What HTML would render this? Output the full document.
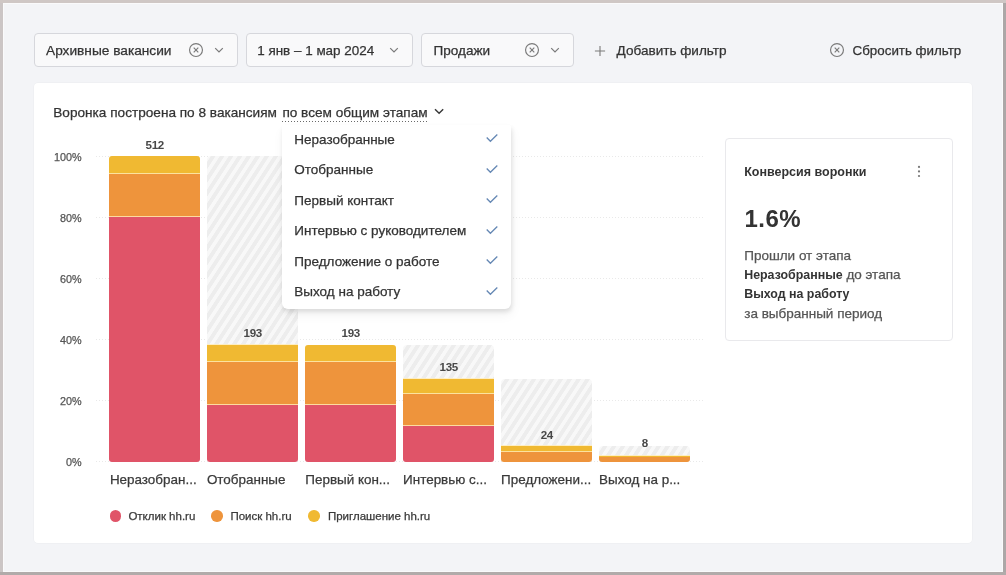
<!DOCTYPE html>
<html>
<head>
<meta charset="utf-8">
<style>
html,body{margin:0;padding:0;}
body{width:1006px;height:575px;overflow:hidden;position:relative;will-change:transform;-webkit-text-stroke:0.25px currentColor;background:#b8b1b1;font-family:"Liberation Sans",sans-serif;color:#333;}
.frame{position:absolute;left:0;top:0;width:1006px;height:575px;background:linear-gradient(#cfc7c5,#cfc7c5) 0 0/1006px 3px no-repeat,linear-gradient(#b1abaa,#b1abaa) 0 572px/1006px 3px no-repeat,linear-gradient(#aca7a7,#aca7a7) 1003px 0/3px 575px no-repeat,#cbc5c5;}
.inner{position:absolute;left:3px;top:3px;width:1000px;height:569px;background:#f3f4f7;box-shadow:inset 0 0 0 1px #fafafb;}
.a{position:absolute;}
.t{position:absolute;white-space:nowrap;line-height:1;}
.box{position:absolute;top:33px;height:32px;border:1px solid #d6d7dc;border-radius:4px;background:#f9f9fa;}
.card{position:absolute;left:34px;top:82.5px;width:938px;height:460.5px;background:#fff;border-radius:4px;box-shadow:0 0 0 0.5px #ebecef;}
.grid{position:absolute;left:96px;width:609px;height:1px;background-image:linear-gradient(to right,#e9e9e9 50%,transparent 50%);background-size:3px 1px;}
.hatch{position:absolute;border-radius:4px 4px 0 0;background:repeating-linear-gradient(123deg,#f8f8f8 0px,#f8f8f8 3px,#ededed 3.6px,#ededed 6.9px,#f8f8f8 7.5px);}
.seg{position:absolute;}
.y{background:#f0b932;}
.o{background:#ee943c;}
.r{background:#e05468;}
.sep{position:absolute;height:1px;background:rgba(255,236,185,0.8);}
.val{-webkit-text-stroke:0;position:absolute;white-space:nowrap;line-height:1;font-size:11.6px;font-weight:bold;color:#484848;letter-spacing:-0.35px;margin-top:-0.2px;text-align:center;width:91px;}
.yl{position:absolute;white-space:nowrap;line-height:1;font-size:10.8px;color:#555;text-align:right;width:60px;left:21.5px;}
.xl{position:absolute;white-space:nowrap;line-height:1;font-size:13.45px;color:#3a3a3a;top:473.4px;margin-left:-0.5px;}
.dd{position:absolute;left:282px;top:125px;width:229px;height:184px;background:#fff;border-radius:2px 2px 6px 6px;box-shadow:1px 3px 4px rgba(0,0,0,0.10),1px 6px 12px rgba(0,0,0,0.05);}
.di{position:absolute;left:294.3px;white-space:nowrap;line-height:1;font-size:13.5px;margin-top:0.2px;color:#333;}
.ck{position:absolute;left:485px;}
.dot{position:absolute;width:11.5px;height:11.5px;border-radius:50%;top:510.3px;}
.lg{position:absolute;white-space:nowrap;line-height:1;font-size:11.5px;color:#3a3a3a;top:510.8px;}
b,.bold{-webkit-text-stroke:0;}
</style>
</head>
<body>
<div class="frame"></div>
<div class="inner"></div>

<!-- filter bar -->
<div class="box" style="left:34px;width:202px;"></div>
<div class="t" style="left:46px;top:43.8px;font-size:13.7px;">Архивные вакансии</div>
<svg class="a" style="left:188px;top:42.2px" width="16" height="16" viewBox="0 0 16 16"><circle cx="8" cy="8" r="6.45" fill="none" stroke="#7a7a7a" stroke-width="1.15"/><path d="M5.7 5.7L10.3 10.3M10.3 5.7L5.7 10.3" stroke="#7a7a7a" stroke-width="1.15"/></svg>
<svg class="a" style="left:213px;top:45.3px" width="12" height="10" viewBox="0 0 12 10"><path d="M2.2 3.1L6 6.9L9.8 3.1" fill="none" stroke="#7a7a7a" stroke-width="1.2"/></svg>

<div class="box" style="left:246px;width:165px;"></div>
<div class="t" style="left:257.2px;top:43.6px;font-size:13.45px;">1 янв – 1 мар 2024</div>
<svg class="a" style="left:388.2px;top:45.3px" width="12" height="10" viewBox="0 0 12 10"><path d="M2.2 3.1L6 6.9L9.8 3.1" fill="none" stroke="#7a7a7a" stroke-width="1.2"/></svg>

<div class="box" style="left:421px;width:151px;"></div>
<div class="t" style="left:433.6px;top:43.6px;font-size:13.55px;">Продажи</div>
<svg class="a" style="left:523.7px;top:42.2px" width="16" height="16" viewBox="0 0 16 16"><circle cx="8" cy="8" r="6.45" fill="none" stroke="#7a7a7a" stroke-width="1.15"/><path d="M5.7 5.7L10.3 10.3M10.3 5.7L5.7 10.3" stroke="#7a7a7a" stroke-width="1.15"/></svg>
<svg class="a" style="left:548.6px;top:45.3px" width="12" height="10" viewBox="0 0 12 10"><path d="M2.2 3.1L6 6.9L9.8 3.1" fill="none" stroke="#7a7a7a" stroke-width="1.2"/></svg>

<svg class="a" style="left:592px;top:42.6px" width="16" height="16" viewBox="0 0 16 16"><path d="M8 2.9V13.1M2.9 8H13.1" stroke="#7a7a7a" stroke-width="1.1"/></svg>
<div class="t" style="left:616.6px;top:43.6px;font-size:13.55px;">Добавить фильтр</div>

<svg class="a" style="left:828.9px;top:42.2px" width="16" height="16" viewBox="0 0 16 16"><circle cx="8" cy="8" r="6.45" fill="none" stroke="#7a7a7a" stroke-width="1.15"/><path d="M5.7 5.7L10.3 10.3M10.3 5.7L5.7 10.3" stroke="#7a7a7a" stroke-width="1.15"/></svg>
<div class="t" style="left:852.6px;top:43.6px;font-size:13.35px;">Сбросить фильтр</div>

<!-- card -->
<div class="card"></div>
<div class="t" style="left:53.3px;top:105.7px;font-size:13.62px;">Воронка построена по 8 вакансиям</div>
<div class="t" style="left:282.4px;top:105.7px;font-size:13.62px;">по всем общим этапам</div>
<div class="a" style="left:281.8px;top:121px;width:145px;height:1px;background-image:linear-gradient(to right,#6a6a6a 50%,transparent 50%);background-size:3px 1px;"></div>
<svg class="a" style="left:433.3px;top:106.3px" width="12" height="10" viewBox="0 0 12 10"><path d="M2 3.3L6.1 7.3L10.2 3.3" fill="none" stroke="#383838" stroke-width="1.45"/></svg>

<!-- grid -->
<div class="grid" style="top:156px"></div>
<div class="grid" style="top:217px"></div>
<div class="grid" style="top:278px"></div>
<div class="grid" style="top:339px"></div>
<div class="grid" style="top:400px"></div>
<div class="grid" style="top:461px"></div>
<div class="yl" style="top:151.7px">100%</div>
<div class="yl" style="top:212.7px">80%</div>
<div class="yl" style="top:273.7px">60%</div>
<div class="yl" style="top:334.7px">40%</div>
<div class="yl" style="top:395.7px">20%</div>
<div class="yl" style="top:456.7px">0%</div>

<!-- bars -->
<div class="seg y" style="left:109px;top:156px;width:91px;height:18px;border-radius:3px 3px 0 0;"></div>
<div class="seg o" style="left:109px;top:174px;width:91px;height:43px;"></div>
<div class="seg r" style="left:109px;top:217px;width:91px;height:245px;border-bottom-left-radius:3px;border-bottom-right-radius:3px;"></div>
<div class="sep" style="left:109px;top:173px;width:91px"></div>
<div class="sep" style="left:109px;top:216px;width:91px"></div>
<div class="val" style="left:109.25px;top:138.9px">512</div>

<div class="hatch" style="left:207px;top:156px;width:91px;height:189px"></div>
<div class="seg y" style="left:207px;top:345px;width:91px;height:17px;"></div>
<div class="seg o" style="left:207px;top:362px;width:91px;height:43px;"></div>
<div class="seg r" style="left:207px;top:405px;width:91px;height:57px;border-bottom-left-radius:3px;border-bottom-right-radius:3px;"></div>
<div class="sep" style="left:207px;top:344px;width:91px"></div>
<div class="sep" style="left:207px;top:361px;width:91px"></div>
<div class="sep" style="left:207px;top:404px;width:91px"></div>
<div class="val" style="left:207.25px;top:327.2px">193</div>

<div class="seg y" style="left:305px;top:345px;width:91px;height:17px;border-radius:3px 3px 0 0;"></div>
<div class="seg o" style="left:305px;top:362px;width:91px;height:43px;"></div>
<div class="seg r" style="left:305px;top:405px;width:91px;height:57px;border-bottom-left-radius:3px;border-bottom-right-radius:3px;"></div>
<div class="sep" style="left:305px;top:361px;width:91px"></div>
<div class="sep" style="left:305px;top:404px;width:91px"></div>
<div class="val" style="left:305.25px;top:327.2px">193</div>

<div class="hatch" style="left:403px;top:345px;width:91px;height:34px"></div>
<div class="seg y" style="left:403px;top:379px;width:91px;height:15px;"></div>
<div class="seg o" style="left:403px;top:394px;width:91px;height:32px;"></div>
<div class="seg r" style="left:403px;top:426px;width:91px;height:36px;border-bottom-left-radius:3px;border-bottom-right-radius:3px;"></div>
<div class="sep" style="left:403px;top:378px;width:91px"></div>
<div class="sep" style="left:403px;top:393px;width:91px"></div>
<div class="sep" style="left:403px;top:425px;width:91px"></div>
<div class="val" style="left:403.25px;top:361.4px">135</div>

<div class="hatch" style="left:501px;top:379px;width:91px;height:67px"></div>
<div class="seg y" style="left:501px;top:446px;width:91px;height:6px;"></div>
<div class="seg o" style="left:501px;top:452px;width:91px;height:10px;border-bottom-left-radius:3px;border-bottom-right-radius:3px;"></div>
<div class="sep" style="left:501px;top:445px;width:91px"></div>
<div class="sep" style="left:501px;top:451px;width:91px"></div>
<div class="val" style="left:501.25px;top:428.9px">24</div>

<div class="hatch" style="left:599px;top:446px;width:91px;height:10px"></div>
<div class="seg y" style="left:599px;top:456px;width:91px;height:1px;"></div>
<div class="seg o" style="left:599px;top:457px;width:91px;height:5px;border-bottom-left-radius:3px;border-bottom-right-radius:3px;"></div>
<div class="sep" style="left:599px;top:455px;width:91px"></div>
<div class="val" style="left:599.25px;top:437.6px">8</div>

<!-- x labels -->
<div class="xl" style="left:110.4px">Неразобран...</div>
<div class="xl" style="left:207.4px">Отобранные</div>
<div class="xl" style="left:305.8px">Первый кон...</div>
<div class="xl" style="left:403.6px">Интервью с...</div>
<div class="xl" style="left:501.6px">Предложени...</div>
<div class="xl" style="left:599.6px">Выход на р...</div>

<!-- legend -->
<div class="dot r" style="left:109.7px"></div>
<div class="lg" style="left:128.4px">Отклик hh.ru</div>
<div class="dot o" style="left:211.1px"></div>
<div class="lg" style="left:230.4px">Поиск hh.ru</div>
<div class="dot y" style="left:308px"></div>
<div class="lg" style="left:327.9px">Приглашение hh.ru</div>

<!-- info card -->
<div class="a" style="left:724.5px;top:137.5px;width:226px;height:201.5px;border:1px solid #e9e9ec;border-radius:4px;background:#fff;"></div>
<div class="t" style="left:744.2px;top:166px;font-size:12.5px;font-weight:bold;color:#333;-webkit-text-stroke:0;">Конверсия воронки</div>
<svg class="a" style="left:915px;top:163px" width="8" height="16" viewBox="0 0 8 16"><circle cx="4" cy="3.9" r="1.1" fill="#777"/><circle cx="4" cy="8.4" r="1.1" fill="#777"/><circle cx="4" cy="13" r="1.1" fill="#777"/></svg>
<div class="t" style="left:744.5px;top:206.6px;font-size:24px;font-weight:bold;color:#333;-webkit-text-stroke:0;letter-spacing:0.5px;">1.6%</div>
<div class="t" style="left:744.2px;top:248.5px;font-size:13.5px;color:#555;">Прошли от этапа</div>
<div class="t" style="left:744.2px;top:268px;font-size:13.5px;color:#555;"><b style="color:#333;font-size:12.4px">Неразобранные</b> до этапа</div>
<div class="t" style="left:744.2px;top:287.5px;font-size:12.4px;color:#333;font-weight:bold;-webkit-text-stroke:0;">Выход на работу</div>
<div class="t" style="left:744.2px;top:307px;font-size:13.5px;color:#555;">за выбранный период</div>

<!-- dropdown -->
<div class="dd"></div>
<div class="di" style="top:132.46px">Неразобранные</div>
<div class="di" style="top:162.96px">Отобранные</div>
<div class="di" style="top:193.46px">Первый контакт</div>
<div class="di" style="top:223.96px">Интервью с руководителем</div>
<div class="di" style="top:254.46px">Предложение о работе</div>
<div class="di" style="top:284.96px">Выход на работу</div>
<svg class="ck" style="top:131px" width="14" height="12" viewBox="0 0 14 12"><path d="M1.7 6.5L5.4 10.3L12.3 3.5" fill="none" stroke="#6588b4" stroke-width="1.3"/></svg>
<svg class="ck" style="top:161.5px" width="14" height="12" viewBox="0 0 14 12"><path d="M1.7 6.5L5.4 10.3L12.3 3.5" fill="none" stroke="#6588b4" stroke-width="1.3"/></svg>
<svg class="ck" style="top:192px" width="14" height="12" viewBox="0 0 14 12"><path d="M1.7 6.5L5.4 10.3L12.3 3.5" fill="none" stroke="#6588b4" stroke-width="1.3"/></svg>
<svg class="ck" style="top:222.5px" width="14" height="12" viewBox="0 0 14 12"><path d="M1.7 6.5L5.4 10.3L12.3 3.5" fill="none" stroke="#6588b4" stroke-width="1.3"/></svg>
<svg class="ck" style="top:253px" width="14" height="12" viewBox="0 0 14 12"><path d="M1.7 6.5L5.4 10.3L12.3 3.5" fill="none" stroke="#6588b4" stroke-width="1.3"/></svg>
<svg class="ck" style="top:283.5px" width="14" height="12" viewBox="0 0 14 12"><path d="M1.7 6.5L5.4 10.3L12.3 3.5" fill="none" stroke="#6588b4" stroke-width="1.3"/></svg>
</body>
</html>
